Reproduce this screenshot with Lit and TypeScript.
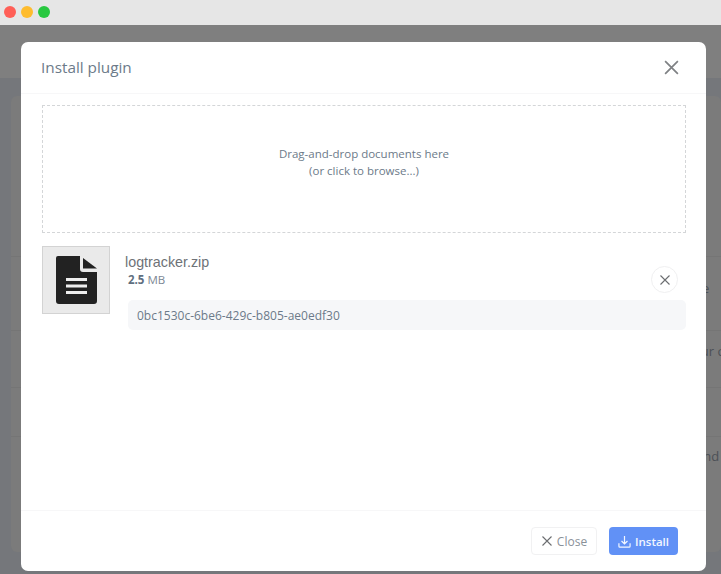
import { LitElement, html, css } from "lit";
import { customElement } from "lit/decorators.js";

const x = (size: number, sw: number) => html`<svg width=${size} height=${size} viewBox="0 0 16 16" fill="none" stroke="currentColor" stroke-width=${sw}><path d="M2 2L14 14M14 2L2 14"/></svg>`;

@customElement("app-root")
export class AppRoot extends LitElement {
  static styles = css`
    :host { display: block; width: 721px; height: 574px; position: relative; overflow: hidden; font-family: "Open Sans", sans-serif; background: #75777b; }
    .chrome { height: 25px; background: #e6e6e6; display: flex; align-items: center; gap: 5px; padding: 0 0 1px 4px; box-sizing: border-box; }
    .dot { width: 12px; height: 12px; border-radius: 50%; }
    .topbar { height: 53px; background: #7f7f7f; }
    .bg { padding: 18px 0 0 11px; }
    .bgcard { height: 456px; background: #7b7b7b; border-radius: 6px; color: #4c5056; font-size: 13px; display: flex; flex-direction: column; }
    .bgrow { width: 100%; border-bottom: 1px solid #757575; display: flex; align-items: center; box-sizing: border-box; white-space: nowrap; overflow: hidden; }
    .r0 { height: 161px; }
    .r1 { height: 74px; padding: 0 0 12px 691px; }
    .r2 { height: 57px; padding: 0 0 17px 682px; }
    .r3 { height: 49px; }
    .r4 { height: 38px; border-bottom: none; padding-left: 685px; }
    .modal { position: absolute; left: 21px; top: 42px; width: 685px; height: 529px; background: #fff; border-radius: 7px; display: flex; flex-direction: column; box-sizing: border-box; }
    .head { height: 52px; flex: none; border-bottom: 1px solid #f7f7f8; box-sizing: border-box; display: flex; align-items: center; justify-content: space-between; padding: 0 26px 1px 20px; }
    h2 { margin: 0; font-size: 15.3px; font-weight: 400; color: #6c7a89; }
    .close { color: #7f8184; display: flex; }
    .body { flex: 1; padding: 11px 20px 0 21px; }
    .drop { height: 128px; border: 1px dashed #d4d6d8; box-sizing: border-box; display: flex; flex-direction: column; align-items: center; justify-content: center; font-size: 11.5px; line-height: 17px; color: #6c7a89; padding-bottom: 14px; }
    .file { display: flex; margin-top: 13px; gap: 15px; }
    .thumb { width: 68px; height: 68px; flex: none; box-sizing: border-box; background: #eaeaea; border: 1px solid #d3d3d3; display: flex; align-items: center; justify-content: center; }
    .info { flex: 1; min-width: 0; }
    .name { font-family: "Liberation Sans", sans-serif; font-size: 14.3px; line-height: 16px; color: #6e7277; margin-top: 8px; }
    .metaRow { display: flex; align-items: center; justify-content: space-between; margin-left: 3px; height: 17px; margin-top: 1px; }
    .size { font-size: 11.5px; color: #7b8794; }
    .size b { font-weight: 700; color: #5f6f80; }
    .remove { width: 27px; height: 27px; box-sizing: border-box; border: 1px solid #f0f0f1; border-radius: 50%; display: flex; align-items: center; justify-content: center; color: #6b6d70; margin-right: 8px; }
    .uuid { margin: 12px 0 0 3px; height: 30px; border-radius: 5px; background: #f6f7f9; display: flex; align-items: center; padding-left: 9px; font-size: 12px; color: #6c7a89; }
    .foot { height: 61px; flex: none; border-top: 1px solid #f7f7f8; box-sizing: border-box; display: flex; justify-content: flex-end; gap: 12px; padding: 16px 28px 0 0; }
    .btn { height: 28px; box-sizing: border-box; border-radius: 4px; display: flex; align-items: center; justify-content: center; font-size: 12px; gap: 4px; }
    .btn.c { width: 66px; background: #fff; border: 1px solid #f1f1f2; color: #8a9199; }
    .btn.c svg { color: #6b6d70; }
    .btn.i { width: 69px; background: #6191f6; color: #f2f6ff; font-weight: 600; font-size: 11.5px; }
  `;

  render() {
    return html`
      <div class="chrome">
        <span class="dot" style="background:#ff5f57"></span>
        <span class="dot" style="background:#febc2e"></span>
        <span class="dot" style="background:#28c840"></span>
      </div>
      <div class="topbar"></div>
      <div class="bg"><div class="bgcard">
        <div class="bgrow r0"></div>
        <div class="bgrow r1">e</div>
        <div class="bgrow r2">our c</div>
        <div class="bgrow r3"></div>
        <div class="bgrow r4">and</div>
      </div></div>
      <div class="modal">
        <div class="head">
          <h2>Install plugin</h2>
          <span class="close">${x(17, 1.6)}</span>
        </div>
        <div class="body">
          <div class="drop"><div>Drag-and-drop documents here</div><div>(or click to browse...)</div></div>
          <div class="file">
            <div class="thumb">
              <svg width="41" height="48" viewBox="0 0 41 48">
                <path fill="#222" d="M2 0H24V13a3 3 0 0 0 3 3H41V45a3 3 0 0 1-3 3H3a3 3 0 0 1-3-3V2a2 2 0 0 1 2-2Z"/>
                <path fill="#222" d="M27 2L41 12.5H27Z"/>
                <path fill="#eee" d="M10 22H31V25H10ZM10 28.5H31V31.5H10ZM10 35H31V38H10Z"/>
              </svg>
            </div>
            <div class="info">
              <div class="name">logtracker.zip</div>
              <div class="metaRow">
                <span class="size"><b>2.5</b> MB</span>
                <span class="remove">${x(12, 1.5)}</span>
              </div>
              <div class="uuid">0bc1530c-6be6-429c-b805-ae0edf30</div>
            </div>
          </div>
        </div>
        <div class="foot">
          <div class="btn c">${x(12, 1.5)}<span>Close</span></div>
          <div class="btn i">
            <svg width="13" height="13" viewBox="0 0 14 14" fill="none" stroke="currentColor" stroke-width="1.3"><path d="M7 1V9.5M3.8 6.5L7 9.7L10.2 6.5M1 9V12A1 1 0 0 0 2 13H12A1 1 0 0 0 13 12V9"/></svg>
            <span>Install</span>
          </div>
        </div>
      </div>
    `;
  }
}
